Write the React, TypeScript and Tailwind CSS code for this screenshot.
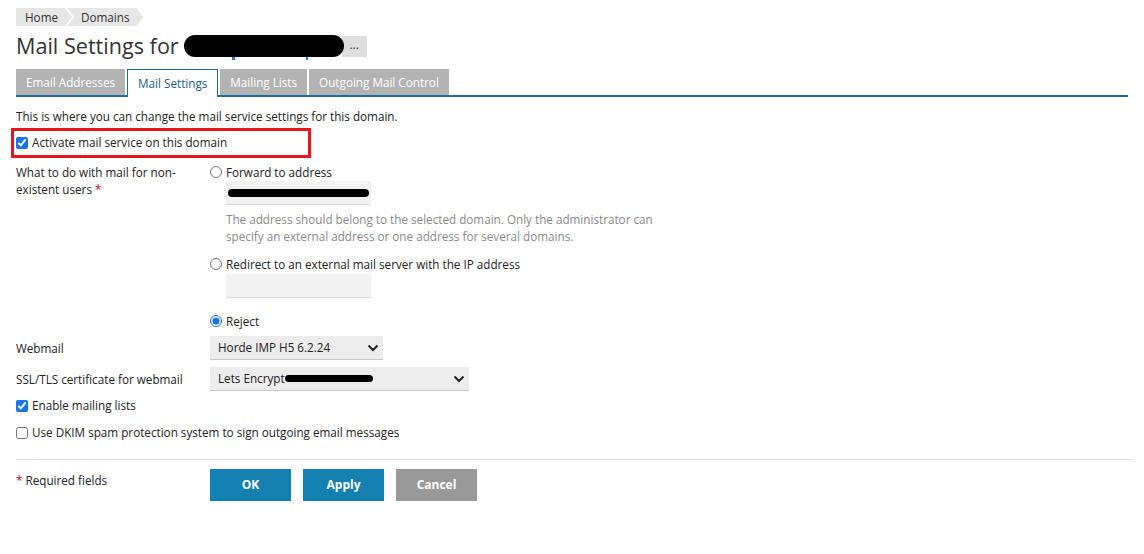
import React from 'react';

const font = { fontFamily: '"Open Sans", "Liberation Sans", sans-serif' };

const Chevron: React.FC = () => (
  <svg width="12" height="8" viewBox="0 0 12 8" className="shrink-0">
    <path d="M1.5 1.5 L6 6 L10.5 1.5" fill="none" stroke="#222" strokeWidth="2" />
  </svg>
);

const Blob: React.FC<{ className: string }> = ({ className }) => (
  <div className={`bg-black rounded-full ${className}`} />
);

const Label: React.FC<{ children: React.ReactNode }> = ({ children }) => (
  <div className="w-[194px] shrink-0 pr-4 leading-[17px]">{children}</div>
);

const tabs = ['Email Addresses', 'Mail Settings', 'Mailing Lists', 'Outgoing Mail Control'];

const App: React.FC = () => {
  return (
    <div className="w-[1144px] h-[554px] bg-white text-[#222] text-[11.7px] px-4 pt-2" style={font}>
      {/* breadcrumb */}
      <div className="flex h-[18px] text-[11.7px] text-[#333]">
        <div className="bg-[#e6e6e6] pl-[9px] pr-[14px] leading-[18px] [clip-path:polygon(0_0,calc(100%-7px)_0,100%_50%,calc(100%-7px)_100%,0_100%)]">
          Home
        </div>
        <div className="-ml-[5px] bg-[#e6e6e6] pl-[14px] pr-[14px] leading-[18px] [clip-path:polygon(0_0,calc(100%-7px)_0,100%_50%,calc(100%-7px)_100%,0_100%,7px_50%)]">
          Domains
        </div>
      </div>

      {/* title */}
      <div className="flex items-center mt-[8px] h-[24px]">
        <h1 className="text-[21.6px] leading-[24px] text-[#333] font-normal">Mail Settings for</h1>
        <div className="relative ml-[5px] w-[160px] h-[22px]">
          <span className="absolute left-[48px] bottom-[-3px] w-[3px] h-[3px] bg-[#2a7fc4]" />
          <span className="absolute left-[122px] bottom-[-3px] w-[2px] h-[3px] bg-[#2a7fc4]" />
          <Blob className="absolute inset-0 rounded-[10px]" />
        </div>
        <div className="-ml-[2px] w-[25px] h-[21px] bg-[#dedede] flex items-center justify-center text-[12px] leading-none text-[#333] pb-[3px]">
          ...
        </div>
      </div>

      {/* tabs */}
      <div className="mt-[11px] flex items-end gap-[2px] border-b-2 border-[#1a6f9a] h-[28px]">
        {tabs.map((t, i) =>
          i === 1 ? (
            <div
              key={t}
              className="h-[28px] -mb-[2px] px-[10px] bg-white border border-b-0 border-[#1a6f9a] text-[#1a5f85] leading-[26px]"
            >
              {t}
            </div>
          ) : (
            <div key={t} className="h-[26px] px-[10px] bg-[#b3b3b3] text-white leading-[26px]">
              {t}
            </div>
          )
        )}
      </div>

      <p className="mt-[10px] leading-[18px]">This is where you can change the mail service settings for this domain.</p>

      {/* highlighted option */}
      <div className="mt-[3px] -ml-[5px] w-[300px] h-[30px] border-[3px] border-[#e8141c] flex items-center pl-[2px]">
        <input type="checkbox" defaultChecked className="w-[12px] h-[12px] m-0 accent-[#1a73e8]" />
        <span className="ml-[4px]">Activate mail service on this domain</span>
      </div>

      {/* non-existent users */}
      <div className="flex mt-[6px]">
        <Label>
          What to do with mail for non-existent users <span className="text-[#d0021b]">*</span>
        </Label>
        <div className="flex flex-col">
          <label className="flex items-center h-[14px] mt-[1px]">
            <input type="radio" name="ne" className="w-[12px] h-[12px] m-0" />
            <span className="ml-[4px] leading-[17px]">Forward to address</span>
          </label>
          <div className="ml-[16px] mt-[2px] w-[145px] h-[24px] bg-[#f2f2f2] border-b border-[#dcdcdc] flex items-center px-[2px]">
            <Blob className="w-[142px] h-[8px]" />
          </div>
          <div className="ml-[16px] mt-[6px] text-[#8a8a8a] leading-[17px]">
            The address should belong to the selected domain. Only the administrator can
            <br />
            specify an external address or one address for several domains.
          </div>
          <label className="flex items-center h-[14px] mt-[12px]">
            <input type="radio" name="ne" className="w-[12px] h-[12px] m-0" />
            <span className="ml-[4px] leading-[17px]">Redirect to an external mail server with the IP address</span>
          </label>
          <div className="ml-[16px] mt-[3px] w-[145px] h-[24px] bg-[#f2f2f2] border-b border-[#dcdcdc]" />
          <label className="flex items-center h-[14px] mt-[16px]">
            <input type="radio" name="ne" defaultChecked className="w-[12px] h-[12px] m-0 accent-[#1a73e8]" />
            <span className="ml-[4px] leading-[17px]">Reject</span>
          </label>
        </div>
      </div>

      {/* webmail */}
      <div className="flex items-center mt-[8px]">
        <Label>Webmail</Label>
        <div className="w-[173px] h-[24px] bg-[#ececec] border-b border-[#c8c8c8] flex items-center justify-between pl-[8px] pr-[4px]">
          <span>Horde IMP H5 6.2.24</span>
          <Chevron />
        </div>
      </div>

      <div className="flex items-center mt-[7px]">
        <Label>SSL/TLS certificate for webmail</Label>
        <div className="w-[259px] h-[24px] bg-[#ececec] border-b border-[#c8c8c8] flex items-center justify-between pl-[8px] pr-[4px]">
          <div className="flex items-center">
            <span>Lets Encrypt</span>
            <Blob className="w-[88px] h-[7px]" />
          </div>
          <Chevron />
        </div>
      </div>

      <label className="flex items-center mt-[6px] h-[17px]">
        <input type="checkbox" defaultChecked className="w-[12px] h-[12px] m-0 accent-[#1a73e8]" />
        <span className="ml-[4px]">Enable mailing lists</span>
      </label>

      <label className="flex items-center mt-[10px] h-[17px]">
        <input type="checkbox" className="w-[12px] h-[12px] m-0" />
        <span className="ml-[4px]">Use DKIM spam protection system to sign outgoing email messages</span>
      </label>

      <div className="mt-[18px] border-t border-[#dcdcdc] w-[1115px]" />

      <div className="flex mt-[9px]">
        <div className="w-[194px] shrink-0 mt-[3px] leading-[17px]">
          <span className="text-[#d0021b]">*</span> Required fields
        </div>
        <div className="flex gap-[12px]">
          <button className="w-[81px] h-[32px] bg-[#1380b2] text-white font-bold text-[12px]">OK</button>
          <button className="w-[81px] h-[32px] bg-[#1380b2] text-white font-bold text-[12px]">Apply</button>
          <button className="w-[81px] h-[32px] bg-[#999999] text-white font-bold text-[12px]">Cancel</button>
        </div>
      </div>
    </div>
  );
};

export default App;
